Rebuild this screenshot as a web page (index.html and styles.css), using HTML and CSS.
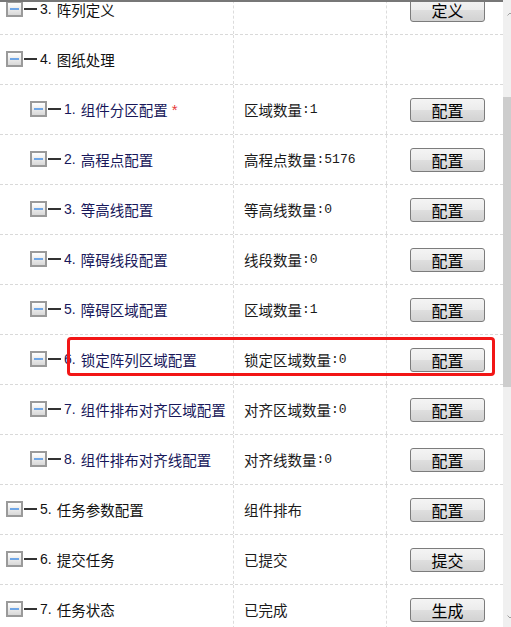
FILE: index.html
```html
<!DOCTYPE html>
<html lang="zh-CN">
<head>
<meta charset="utf-8">
<title>配置</title>
<link rel="stylesheet" href="styles.css">
</head>
<body>
<div class="frame">
  <div class="content">
    <div class="list">
      <div class="row">
        <div class="c1 top"><span class="box"></span><span class="conn"></span><span class="no">3.</span><span class="lbl">阵列定义</span></div>
        <div class="c2"></div>
        <div class="c3"><button class="btn">定义</button></div>
      </div>
      <div class="row">
        <div class="c1 top"><span class="box"></span><span class="conn"></span><span class="no">4.</span><span class="lbl">图纸处理</span></div>
        <div class="c2"></div>
        <div class="c3"></div>
      </div>
      <div class="row">
        <div class="c1 sub"><span class="box"></span><span class="conn"></span><span class="no">1.</span><span class="lbl">组件分区配置</span><span class="req">*</span></div>
        <div class="c2">区域数量<span class="num">:1</span></div>
        <div class="c3"><button class="btn">配置</button></div>
      </div>
      <div class="row">
        <div class="c1 sub"><span class="box"></span><span class="conn"></span><span class="no">2.</span><span class="lbl">高程点配置</span></div>
        <div class="c2">高程点数量<span class="num">:5176</span></div>
        <div class="c3"><button class="btn">配置</button></div>
      </div>
      <div class="row">
        <div class="c1 sub"><span class="box"></span><span class="conn"></span><span class="no">3.</span><span class="lbl">等高线配置</span></div>
        <div class="c2">等高线数量<span class="num">:0</span></div>
        <div class="c3"><button class="btn">配置</button></div>
      </div>
      <div class="row">
        <div class="c1 sub"><span class="box"></span><span class="conn"></span><span class="no">4.</span><span class="lbl">障碍线段配置</span></div>
        <div class="c2">线段数量<span class="num">:0</span></div>
        <div class="c3"><button class="btn">配置</button></div>
      </div>
      <div class="row">
        <div class="c1 sub"><span class="box"></span><span class="conn"></span><span class="no">5.</span><span class="lbl">障碍区域配置</span></div>
        <div class="c2">区域数量<span class="num">:1</span></div>
        <div class="c3"><button class="btn">配置</button></div>
      </div>
      <div class="row">
        <div class="c1 sub"><span class="box"></span><span class="conn"></span><span class="no">6.</span><span class="lbl">锁定阵列区域配置</span></div>
        <div class="c2">锁定区域数量<span class="num">:0</span></div>
        <div class="c3"><button class="btn">配置</button></div>
      </div>
      <div class="row">
        <div class="c1 sub"><span class="box"></span><span class="conn"></span><span class="no">7.</span><span class="lbl">组件排布对齐区域配置</span></div>
        <div class="c2">对齐区域数量<span class="num">:0</span></div>
        <div class="c3"><button class="btn">配置</button></div>
      </div>
      <div class="row">
        <div class="c1 sub"><span class="box"></span><span class="conn"></span><span class="no">8.</span><span class="lbl">组件排布对齐线配置</span></div>
        <div class="c2">对齐线数量<span class="num">:0</span></div>
        <div class="c3"><button class="btn">配置</button></div>
      </div>
      <div class="row">
        <div class="c1 top"><span class="box"></span><span class="conn"></span><span class="no">5.</span><span class="lbl">任务参数配置</span></div>
        <div class="c2">组件排布</div>
        <div class="c3"><button class="btn">配置</button></div>
      </div>
      <div class="row">
        <div class="c1 top"><span class="box"></span><span class="conn"></span><span class="no">6.</span><span class="lbl">提交任务</span></div>
        <div class="c2">已提交</div>
        <div class="c3"><button class="btn">提交</button></div>
      </div>
      <div class="row">
        <div class="c1 top"><span class="box"></span><span class="conn"></span><span class="no">7.</span><span class="lbl">任务状态</span></div>
        <div class="c2">已完成</div>
        <div class="c3"><button class="btn">生成</button></div>
      </div>
    </div>
  </div>
  <div class="scrollbar">
    <svg class="arrow up" width="6" height="4" viewBox="0 0 6 4"><path d="M0.5 3.5 L3 1 L5.5 3.5" fill="none" stroke="#a0a0a0" stroke-width="1"/></svg>
    <div class="thumb"></div>
    <svg class="arrow down" width="6" height="4" viewBox="0 0 6 4"><path d="M0.5 0.5 L3 3 L5.5 0.5" fill="none" stroke="#a0a0a0" stroke-width="1"/></svg>
  </div>
  <div class="highlight"></div>
</div>
</body>
</html>
```

FILE: styles.css
```css
html, body {
  margin: 0;
  padding: 0;
  background: #fff;
}
body {
  font-family: "Noto Sans CJK SC", "Liberation Sans", sans-serif;
  font-size: 14px;
  color: #111;
}
.frame {
  position: relative;
  width: 511px;
  height: 627px;
  display: flex;
  overflow: hidden;
}
.content {
  width: 503px;
  border-top: 2px solid #777;
  overflow: hidden;
}
.list {
  margin-top: -17px;
}
.row {
  display: flex;
  height: 49px;
  border-bottom: 1px dashed #d9d9d9;
}
.c1, .c2, .c3 {
  display: flex;
  align-items: center;
  box-sizing: border-box;
}
.c1 {
  width: 234px;
  border-right: 1px dashed #dcdcdc;
  white-space: nowrap;
  font-size: 14.5px;
  padding-bottom: 1px;
}
.c1.top { padding-left: 6px; color: #111; }
.c1.sub { padding-left: 30px; color: #17175a; }
.box {
  width: 17px;
  height: 16px;
  box-sizing: border-box;
  border: 2px solid #9a9a9a;
  background: linear-gradient(#ffffff, #d8d8d8);
  position: relative;
  flex: none;
}
.box::after {
  content: "";
  position: absolute;
  left: 2px;
  right: 2px;
  top: 5px;
  height: 2px;
  background: #6fa6e6;
}
.conn {
  width: 13px;
  height: 2px;
  margin-left: 1px;
  background: #333;
  flex: none;
}
.no {
  margin-left: 3px;
  font-family: "Liberation Sans", sans-serif;
  font-size: 14px;
}
.lbl {
  margin-left: 5px;
}
.req {
  color: #e83a3a;
  margin-left: 4px;
  font-family: "Liberation Sans", sans-serif;
  font-size: 15px;
}
.c2 {
  width: 153px;
  padding-left: 10px;
  padding-bottom: 1px;
  border-right: 1px dashed #dcdcdc;
  color: #1a1a1a;
  white-space: nowrap;
  font-size: 14.5px;
}
.num {
  font-family: "Liberation Mono", monospace;
  font-size: 13px;
}
.c3 {
  flex: 1;
  padding-left: 23px;
}
.btn {
  width: 75px;
  height: 24px;
  padding: 0;
  border: 1px solid #7c7c7c;
  border-radius: 3px;
  background: linear-gradient(#f4f4f4 0%, #ececec 48%, #dedede 52%, #d2d2d2 100%);
  font-family: "Noto Sans CJK SC", sans-serif;
  font-size: 16px;
  line-height: 20px;
  color: #000;
}
.scrollbar {
  width: 8px;
  background: #f0f0f0;
  position: relative;
}
.thumb {
  position: absolute;
  left: 0;
  right: 0;
  top: 97px;
  height: 290px;
  background: #cdcdcd;
}
.arrow {
  position: absolute;
  left: 4px;
}
.arrow.up { top: 12px; }
.arrow.down { bottom: 8px; }
.highlight {
  position: absolute;
  left: 67px;
  top: 337px;
  width: 422px;
  height: 33px;
  border: 3px solid #f21616;
  border-radius: 4px;
  pointer-events: none;
}
```
